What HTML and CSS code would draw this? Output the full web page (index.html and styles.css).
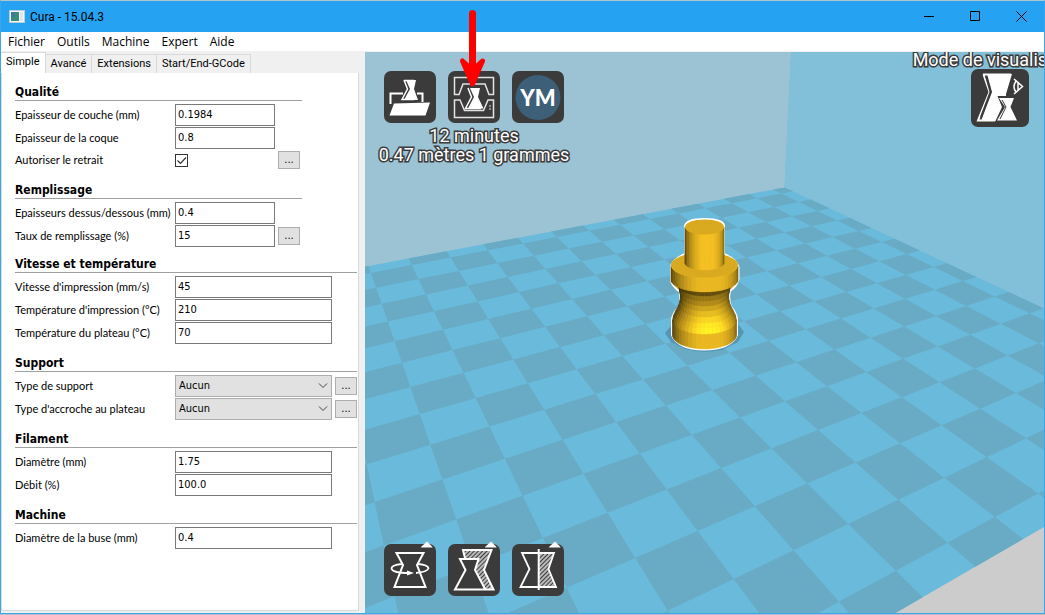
FILE: index.html
```html
<!DOCTYPE html>
<html lang="fr">
<head>
<meta charset="utf-8">
<title>Cura - 15.04.3</title>
<link rel="stylesheet" href="styles.css">
</head>
<body>
<div class="window">
  <header class="titlebar">
    <svg class="app-icon" viewBox="0 0 16 13" aria-hidden="true"><rect x=".5" y=".5" width="15" height="12" fill="#f4f8fa" stroke="#b9cfdc"/><rect x="2" y="2" width="8" height="9" fill="#3c8c7c"/><rect x="2" y="2" width="4" height="5" fill="#3f78a0"/><rect x="11" y="2" width="3" height="9" fill="#dde6ea"/></svg>
    <h1 class="app-title">Cura - 15.04.3</h1>
    <div class="window-buttons">
      <button type="button" aria-label="Réduire"><svg viewBox="0 0 11 11"><path d="M0 5.5H10"/></svg></button>
      <button type="button" aria-label="Agrandir"><svg viewBox="0 0 11 11"><path d="M.5 .5H9.500V9.500H.5Z"/></svg></button>
      <button type="button" aria-label="Fermer"><svg viewBox="0 0 11 11"><path d="M.5 .5L10.500 10.500M10.500 .5L.5 10.500"/></svg></button>
    </div>
  </header>
  <nav class="menubar">
    <button type="button">Fichier</button><button type="button">Outils</button><button type="button">Machine</button><button type="button">Expert</button><button type="button">Aide</button>
  </nav>
  <main class="workspace">
    <aside class="sidebar">
      <div class="tabs" role="tablist">
        <button class="tab tab--active" type="button" role="tab" aria-selected="true">Simple</button>
        <button class="tab" type="button" role="tab">Avancé</button>
        <button class="tab" type="button" role="tab">Extensions</button>
        <button class="tab" type="button" role="tab">Start/End-GCode</button>
      </div>
      <form class="settings">
        <section class="group group--narrow">
          <h2>Qualité</h2>
          <div class="row"><label for="layer">Epaisseur de couche (mm)</label><input id="layer" type="text" value="0.1984"></div>
          <div class="row"><label for="shell">Epaisseur de la coque</label><input id="shell" type="text" value="0.8"></div>
          <div class="row row--check"><label for="retract">Autoriser le retrait</label><input id="retract" type="checkbox" checked><button type="button" class="more">...</button></div>
        </section>
        <section class="group group--narrow">
          <h2>Remplissage</h2>
          <div class="row"><label for="solid">Epaisseurs dessus/dessous (mm)</label><input id="solid" type="text" value="0.4"></div>
          <div class="row"><label for="fill">Taux de remplissage (%)</label><input id="fill" type="text" value="15"><button type="button" class="more">...</button></div>
        </section>
        <section class="group">
          <h2>Vitesse et température</h2>
          <div class="row"><label for="speed">Vitesse d'impression (mm/s)</label><input id="speed" type="text" value="45"></div>
          <div class="row"><label for="temp">Température d'impression (°C)</label><input id="temp" type="text" value="210"></div>
          <div class="row"><label for="bed">Température du plateau (°C)</label><input id="bed" type="text" value="70"></div>
        </section>
        <section class="group">
          <h2>Support</h2>
          <div class="row"><label for="support">Type de support</label><select id="support"><option>Aucun</option></select><button type="button" class="more">...</button></div>
          <div class="row"><label for="adhesion">Type d'accroche au plateau</label><select id="adhesion"><option>Aucun</option></select><button type="button" class="more">...</button></div>
        </section>
        <section class="group">
          <h2>Filament</h2>
          <div class="row"><label for="diameter">Diamètre (mm)</label><input id="diameter" type="text" value="1.75"></div>
          <div class="row"><label for="flow">Débit (%)</label><input id="flow" type="text" value="100.0"></div>
        </section>
        <section class="group">
          <h2>Machine</h2>
          <div class="row"><label for="nozzle">Diamètre de la buse (mm)</label><input id="nozzle" type="text" value="0.4"></div>
        </section>
      </form>
    </aside>

    <section class="viewport" aria-label="Vue 3D">
      <svg class="scene" viewBox="365 52 679 561" preserveAspectRatio="xMidYMid slice" aria-hidden="true">
        <rect x="0" y="0" width="1400" height="900" fill="#ccc"/>
        <path d="M300 0H793L784 187L300 400Z" fill="#9bc3d4"/>
        <path d="M793 0H1400V500L784 187Z" fill="#82bfd8"/>
        <path id="bed-base" fill="#69badb"/>
        <path id="bed-dark" fill="#69aac4"/>
        <path d="M665 333L676 320H735L744 332L738 342L722 350Q704 354 685 349L671 342Z" fill="#5497b3"/>
        <path d="M685 226V254Q671 260 671 268V281Q673 287 680 292Q681 305 678 308Q672 315 672 320V335Q678 349 704 349.500Q731 349 737 335V318Q735 311 731 307Q728 298 730 291Q737 286 738.500 279V267Q736 259 724 254V226Q724 219 704.500 219Q686 219 685 226Z" fill="#e6b421" stroke="#fff" stroke-width="2"/>
        <g id="model"></g>
      </svg>
      <div class="overlay">
        <div class="overlay-top">
          <div class="job">
            <div class="tools">
              <button type="button" class="tool" aria-label="Charger"><svg viewBox="0 0 52 52"><path d="M6.500 33V22.500H19M33 22.500H38.500V31" fill="none" stroke="#fff" stroke-width="2"/><path d="M22 9H32L30 18L34 29H20L26 18Z" fill="#fff"/><path d="M20 9.500H30M20 9L23.500 18L18 28.500H30" fill="none" stroke="#fff" stroke-width="1.500"/><path d="M10 32.500L46 31.500L41.500 44.500H5.500Z" fill="#fff"/></svg></button>
              <button type="button" class="tool" aria-label="Imprimer"><svg viewBox="0 0 52 52"><path d="M6.500 23.500V6.500H45.500V23.500H41L37 13H15L11 23.500ZM6.500 29H12L16.500 39.500H35.500L40 29H45.500V46.500H6.500Z" fill="none" stroke="#e4e4e4" stroke-width="1.500"/><path d="M22 17H32L30 26L35.500 37.500H20L26 26Z" fill="#fff"/><path d="M20 17L23.500 26L17.500 37.500H33" fill="none" stroke="#fff" stroke-width="1.500"/><path d="M41 35H43M41 38H43" stroke="#ddd"/></svg></button>
              <button type="button" class="tool" aria-label="YouMagine"><svg viewBox="0 0 52 52"><circle cx="26" cy="26.500" r="22.500" fill="#3d6078"/><text x="26" y="34.500" text-anchor="middle" class="ym">YM</text></svg></button>
            </div>
            <p class="hud-text">12 minutes<br>0.47 mètres 1 grammes</p>
          </div>
          <div class="view-mode">
            <span class="hud-text">Mode de visualisation</span>
            <button type="button" class="tool tool--large" aria-label="Mode de visualisation"><svg viewBox="0 0 58 58"><path d="M16 5H41L35 25V30L33 38L26 52H10L21 23Z" fill="#fff"/><path d="M12 5.500H40M12.500 5.500L18.500 23L7 51.500H26" fill="none" stroke="#fff" stroke-width="2"/><path d="M15 7L19.500 23L10 48" fill="none" stroke="#3b3b3b" stroke-width="2"/><path d="M26.500 27H45L41.500 38L47.500 53H24L31 38Z" fill="#3b3b3b"/><path d="M28 29H43L39.500 38L46 51.500H26L34 38Z" fill="#fff"/><path d="M31 31L35 38L29 50" fill="none" stroke="#3b3b3b"/><path d="M43 10L51.500 17.500L43 25M45 12Q41 18 45 23M47 14V21" fill="none" stroke="#fff" stroke-width="1.500"/></svg></button>
          </div>
        </div>
        <div class="tools">
          <button type="button" class="tool" aria-label="Rotation"><svg viewBox="0 0 52 52"><path d="M12.500 9H39.500L33 21L41.500 43H10.500L19 21Z" fill="none" stroke="#fff" stroke-width="2"/><path d="M18 20Q7.500 21 7.500 24.500Q8.500 29 25 29M34 20Q44.500 21 44.500 24.500Q43 28 32 29" fill="none" stroke="#fff" stroke-width="1.800"/><path d="M23 26.500L30 29L23 31.500Z" fill="#fff"/><path class="corner" d="M37 3.500V3L43 -2.500L48.500 3V3.500Z"/></svg></button>
          <button type="button" class="tool" aria-label="Échelle"><svg viewBox="0 0 52 52"><defs><pattern id="hatch" width="3" height="3" patternUnits="userSpaceOnUse" patternTransform="rotate(45)"><path d="M1 0V3" stroke="#fff" stroke-width="1.300"/></pattern></defs><path d="M15 6H43.500L36 26L45.500 45.500H37L27 26L30.500 15H17Z" fill="url(#hatch)"/><path d="M17 14L15 6H43.500L36 26L45.500 45.500H7L17.500 26L12 15H30.500L27 26L37 45" fill="none" stroke="#fff" stroke-width="2"/><path class="corner" d="M37 3.500V3L43 -2.500L48.500 3V3.500Z"/></svg></button>
          <button type="button" class="tool" aria-label="Miroir"><svg viewBox="0 0 52 52"><path d="M27 9H42L36.500 25L44 43H27Z" fill="url(#hatch)"/><path d="M10 9H42L36.500 25L44 43H8.500L17.500 25Z" fill="none" stroke="#fff" stroke-width="1.800"/><path d="M26.700 5V46" stroke="#fff" stroke-width="2"/><path class="corner" d="M37 3.500V3L43 -2.500L48.500 3V3.500Z"/></svg></button>
        </div>
      </div>
    </section>
  </main>
  <svg class="pointer" viewBox="0 0 28 80" aria-hidden="true"><path d="M13.500 3.500V62" stroke-width="7"/><path d="M3.500 51L13.500 74L23.500 51L13.500 60Z" stroke-width="5" fill="#f00"/></svg>
</div>
<script src="scene.js"></script>
</body>
</html>
```

FILE: styles.css
```css
* { box-sizing: border-box; }
html, body { height: 100%; }
body {
  margin: 0;
  background: #b9bcc4;
  font-family: "DejaVu Sans Condensed", "DejaVu Sans", sans-serif;
  font-size: 11px;
  line-height: 14px;
  color: #000;
  overflow: hidden;
}
button, input, select { font: inherit; color: inherit; margin: 0; }
button { padding: 0; border: 0; background: none; }
h1, h2, p { margin: 0; }

.window {
  position: relative;
  display: flex;
  flex-direction: column;
  height: calc(100% - 1px);
  border: 1px solid #3ba7ea;
  border-top-color: #b4c4cc;
}
.titlebar {
  display: flex;
  align-items: center;
  height: 31px;
  padding-left: 8px;
  background: #26a2f2;
}
.app-icon { width: 16px; height: 13px; }
.app-title {
  flex: 1;
  padding-left: 5px;
  font: 12px/16px Roboto, sans-serif;
}
.window-buttons { display: flex; }
.window-buttons button { width: 46px; height: 30px; }
.window-buttons svg {
  display: block;
  width: 11px;
  height: 11px;
  margin: auto;
  fill: none;
  stroke: #000;
  stroke-width: 1;
}
.menubar {
  display: flex;
  gap: 12px;
  height: 20px;
  padding-left: 7px;
  background: #fff;
  border-bottom: 1px solid #f0f0f0;
  font: 12px/18px "Open Sans", sans-serif;
}
.workspace { flex: 1; display: flex; min-height: 0; }

.sidebar {
  flex: none;
  display: flex;
  flex-direction: column;
  width: 364px;
  padding: 0 6px 2px 0;
  background: #f0f0f0;
}
.tabs {
  display: flex;
  align-items: flex-end;
  height: 21px;
  font-family: Roboto, sans-serif;
}
.tab {
  height: 19px;
  padding: 0 5px;
  border: 1px solid #d9d9d9;
  border-width: 1px 1px 0 0;
}
.tab--active {
  height: 21px;
  padding: 0 5px 2px;
  background: #fff;
}
.settings {
  flex: 1;
  padding: 3px 1px 0 13px;
  background: #fff;
  border: 1px solid #d9d9d9;
  border-width: 0 1px 1px;
}
.group { padding-bottom: 3px; }
.group--narrow { width: 287px; padding-bottom: 1px; }
.group h2 {
  height: 25px;
  margin-bottom: 2px;
  padding-top: 8px;
  border-bottom: 1px solid #a0a0a0;
  font-size: 12px;
  line-height: 16px;
}
.row {
  display: grid;
  grid-template-columns: 160px 1fr 22px;
  column-gap: 3px;
  align-items: center;
  height: 23px;
}
.group--narrow .row { padding-right: 2px; }
.row label {
  margin-right: -3px;
  font-family: Lato, sans-serif;
  white-space: nowrap;
}
.row input, .row select { margin-left: -3px; }
.row input[type="text"] {
  height: 22px;
  min-width: 0;
  padding: 0 2px 1px;
  border: 1px solid #7a7a7a;
  background: #fff;
}
.row select {
  height: 22px;
  padding: 0 3px;
  border: 1px solid #adadad;
  appearance: none;
  background: #e1e1e1 url("data:image/svg+xml,%3Csvg xmlns='http://www.w3.org/2000/svg' width='10' height='6'%3E%3Cpath d='M1 .5L5 4.500L9 .5' fill='none' stroke='%23444'/%3E%3C/svg%3E") no-repeat right 3px center;
}
.row--check { height: 22px; margin-bottom: 2px; }
.row input[type="checkbox"] {
  width: 13px;
  height: 13px;
  appearance: none;
  border: 1px solid #333;
  background: url("data:image/svg+xml,%3Csvg xmlns='http://www.w3.org/2000/svg' width='11' height='11'%3E%3Cpath d='M1.500 5.500L4.500 8.500L10 2.500' fill='none' stroke='%23333' stroke-width='1.200'/%3E%3C/svg%3E") no-repeat center;
}
.more {
  height: 18px;
  border: 1px solid #adadad;
  background: #e1e1e1;
  line-height: 12px;
}

.viewport { position: relative; flex: 1; min-width: 0; overflow: hidden; }
.scene { display: block; width: 100%; height: 100%; }
.overlay {
  position: absolute;
  inset: 0;
  display: flex;
  flex-direction: column;
  justify-content: space-between;
  padding: 0 15px 17px 19px;
}
.overlay-top { display: flex; justify-content: space-between; }
.job { padding-top: 19px; }
.tools { display: flex; gap: 12px; }
.tool {
  width: 52px;
  height: 52px;
  border-radius: 7px;
  background: #3b3b3b;
}
.tool svg { display: block; width: 100%; height: 100%; overflow: visible; }
.tool--large { width: 58px; height: 58px; }
.corner { fill: #fff; }
.ym { font: 900 22px Lato, sans-serif; fill: #fff; }
.hud-text {
  font: 18px/19px Roboto, sans-serif;
  color: #fff;
  text-align: center;
  white-space: nowrap;
  -webkit-text-stroke: 3px #3b3b3b;
  paint-order: stroke fill;
}
.job .hud-text { width: 180px; padding-top: 3px; display: flex; justify-content: center; }
.view-mode {
  display: flex;
  flex-direction: column;
  align-items: center;
  width: 58px;
}
.view-mode .hud-text { height: 17px; line-height: 16px; }

.pointer {
  position: absolute;
  left: 458px;
  top: 9px;
  width: 28px;
  height: 80px;
  fill: none;
  stroke: #f00;
  stroke-linecap: round;
  stroke-linejoin: round;
}
```

FILE: scene.js
```javascript
// Perspective mapping from bed grid cells to scene coordinates.
const anchors = [
  [-6, -12, 376, 287.7],
  [6, -12, 774, 207],
  [-2, 1, 839, 601.7],
  [7, -3, 1029.7, 313.3]
];

function solve(rows) {
  const n = rows.length;
  for (let c = 0; c < n; c++) {
    let p = c;
    for (let r = c + 1; r < n; r++) if (Math.abs(rows[r][c]) > Math.abs(rows[p][c])) p = r;
    [rows[c], rows[p]] = [rows[p], rows[c]];
    for (let r = 0; r < n; r++) {
      if (r === c) continue;
      const f = rows[r][c] / rows[c][c];
      for (let k = c; k <= n; k++) rows[r][k] -= f * rows[c][k];
    }
  }
  return rows.map((row, i) => row[n] / row[i]);
}

const equations = [];
for (const [i, j, x, y] of anchors) {
  equations.push([i, j, 1, 0, 0, 0, -i * x, -j * x, x]);
  equations.push([0, 0, 0, i, j, 1, -i * y, -j * y, y]);
}
const h = solve(equations);

function project(i, j) {
  const w = h[6] * i + h[7] * j + 1;
  return ((h[0] * i + h[1] * j + h[2]) / w).toFixed(2) + " " + ((h[3] * i + h[4] * j + h[5]) / w).toFixed(2);
}

const bed = { left: -7.5, right: 7.5, back: -13.5, front: 1.5 };

function cell(i0, j0, i1, j1) {
  return "M" + [project(i0, j0), project(i1, j0), project(i1, j1), project(i0, j1)].join("L") + "Z";
}

document.getElementById("bed-base").setAttribute("d", cell(bed.left, bed.back, bed.right, bed.front));

let dark = "";
for (let i = -8; i < 8; i++) {
  for (let j = -14; j < 2; j++) {
    if ((i + j) % 2 === 0) continue;
    dark += cell(Math.max(i, bed.left), Math.max(j, bed.back), Math.min(i + 1, bed.right), Math.min(j + 1, bed.front));
  }
}
document.getElementById("bed-dark").setAttribute("d", dark);

// Turned model: bands of facets between rings (centre y, half width, half height).
const model = document.getElementById("model");
const cx = 704.5;

function add(tag, attrs) {
  const el = document.createElementNS("http://www.w3.org/2000/svg", tag);
  for (const name in attrs) el.setAttribute(name, attrs[name]);
  model.appendChild(el);
}

function band(top, bottom, strength, glow) {
  const steps = 24;
  for (let k = 0; k < steps; k++) {
    const a = Math.PI * k / steps;
    const b = Math.PI * (k + 1) / steps;
    const facing = Math.cos((a + b) / 2 - 1.75);
    const light = Math.max(0.32, Math.min(1, 0.32 + 0.72 * facing)) * strength;
    const shine = glow * Math.max(0, facing) ** 6;
    const point = (ring, t) => (cx - ring[1] * Math.cos(t)).toFixed(2) + "," + (ring[0] + ring[2] * Math.sin(t)).toFixed(2);
    const fill = `rgb(${Math.min(255, 244 * light + 10 * shine)},${Math.min(255, 192 * light + 40 * shine)},${36 * light})`;
    add("polygon", { points: [point(top, a), point(top, b), point(bottom, b), point(bottom, a)].join(" "), fill, stroke: fill, "stroke-width": 0.4 });
  }
}

const neck = [
  [280, 30, 12], [285, 26, 11], [290, 25, 11], [295, 24, 11], [300, 24.500, 11],
  [305, 26, 12], [310, 28.500, 13], [315, 31, 13], [320, 32, 14]
];
const strengths = [0.4, 0.62, 0.72, 0.84, 0.93, 1, 1.04, 1.06];
const glows = [0, 0, 0, 0.1, 0.3, 0.6, 0.9, 1];
band([320, 32, 14], [335, 32, 14], 0.96, 0);
for (let n = neck.length - 2; n >= 0; n--) band(neck[n], neck[n + 1], strengths[n], glows[n]);
band([266, 33.500, 12], [280, 33.500, 12], 0.96, 0);
add("ellipse", { cx, cy: 265, rx: 33.5, ry: 12.5, fill: "#d9aa20" });
band([227, 19.500, 7], [263, 19.500, 7], 1, 0);
add("ellipse", { cx, cy: 227, rx: 19.5, ry: 7.5, fill: "#d9aa20" });
```
